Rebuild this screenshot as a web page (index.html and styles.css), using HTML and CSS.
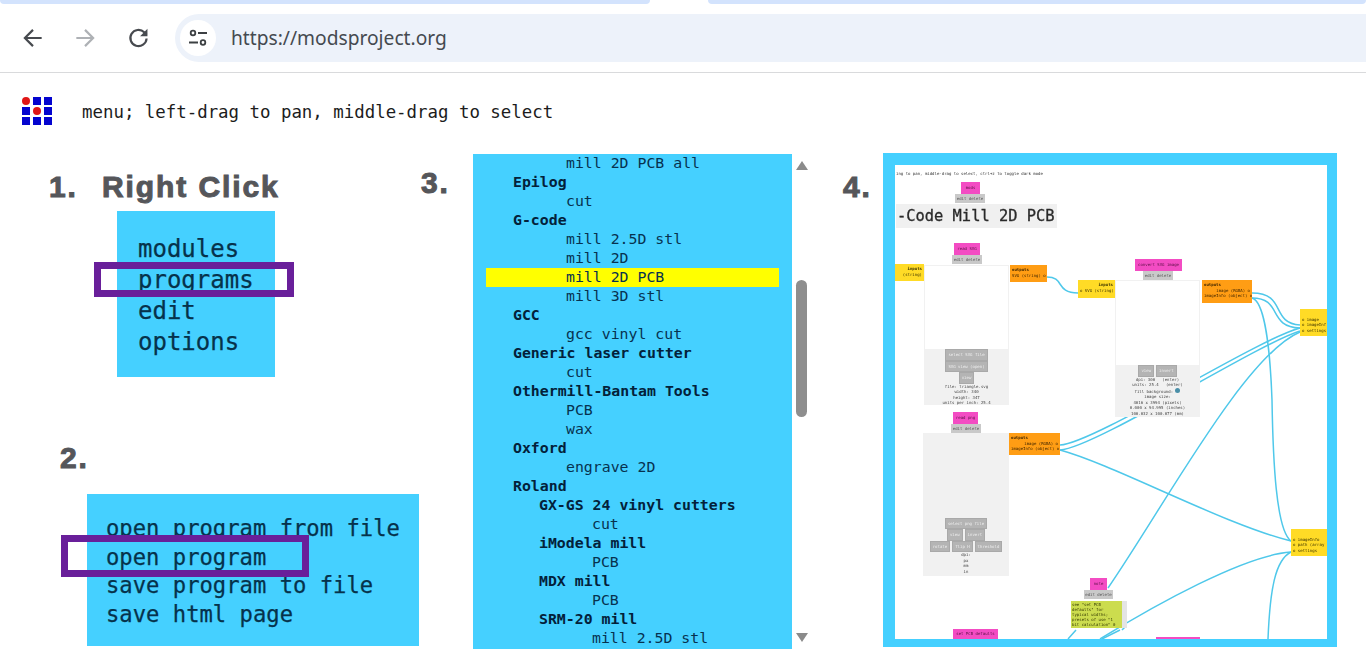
FILE: index.html
```html
<!DOCTYPE html>
<html lang="en">
<head>
<meta charset="utf-8">
<title>mods project</title>
<link rel="stylesheet" href="styles.css">
</head>
<body>
<header class="browser">
  <div class="tabstrip"><span class="strip strip-left"></span><span class="strip strip-right"></span></div>
  <div class="toolbar">
    <svg class="tool" viewBox="0 0 24 24"><path d="M20 12H5M12 4.500 4.500 12l7.500 7.500" fill="none" stroke="#474a4f" stroke-width="2"/></svg>
    <svg class="tool" viewBox="0 0 24 24"><path d="M4 12h15M12 4.500l7.500 7.500-7.500 7.500" fill="none" stroke="#aeb1b5" stroke-width="2"/></svg>
    <svg class="tool" viewBox="0 0 24 24"><path d="M19 12.500a7.500 7.500 0 1 1-2.200-5.800L19 9" fill="none" stroke="#474a4f" stroke-width="2"/><path d="M19.800 3.500v6.800H13z" fill="#474a4f"/></svg>
    <div class="omnibox">
      <span class="site-chip">
        <svg class="chip-icon" viewBox="0 0 20 20"><g fill="none" stroke="#3c4043" stroke-width="1.800"><circle cx="5" cy="5" r="2.300"/><path d="M10 5h9M1 14.500h9"/><circle cx="15" cy="14.500" r="2.300"/></g></svg>
      </span>
      <span class="url">https://modsproject.org</span>
    </div>
  </div>
</header>
<main class="canvas">
  <div class="logo">
    <i class="dot"></i><i></i><i></i>
    <i></i><i class="dot"></i><i></i>
    <i></i><i></i><i></i>
  </div>
  <p class="hint">menu; left-drag to pan, middle-drag to select</p>

  <h2 class="step step-1"><span class="step-num">1.</span>Right Click</h2>
  <ul class="menu menu-1">
    <li>modules</li><li>programs</li><li>edit</li><li>options</li>
  </ul>
  <div class="frame frame-1"></div>

  <h2 class="step step-2">2.</h2>
  <ul class="menu menu-2">
    <li>open program from file</li><li>open program</li><li>save program to file</li><li>save html page</li>
  </ul>
  <div class="frame frame-2"></div>

  <h2 class="step step-3">3.</h2>
  <div class="listing">
    <ul class="programs">
      <li class="lv2">mill 2D PCB all</li>
      <li class="lv1 b">Epilog</li>
      <li class="lv2">cut</li>
      <li class="lv1 b">G-code</li>
      <li class="lv2">mill 2.5D stl</li>
      <li class="lv2">mill 2D</li>
      <li class="lv2 hit">mill 2D PCB</li>
      <li class="lv2">mill 3D stl</li>
      <li class="lv1 b">GCC</li>
      <li class="lv2">gcc vinyl cut</li>
      <li class="lv1 b">Generic laser cutter</li>
      <li class="lv2">cut</li>
      <li class="lv1 b">Othermill-Bantam Tools</li>
      <li class="lv2">PCB</li>
      <li class="lv2">wax</li>
      <li class="lv1 b">Oxford</li>
      <li class="lv2">engrave 2D</li>
      <li class="lv1 b">Roland</li>
      <li class="lv3 b">GX-GS 24 vinyl cutters</li>
      <li class="lv4">cut</li>
      <li class="lv3 b">iModela mill</li>
      <li class="lv4">PCB</li>
      <li class="lv3 b">MDX mill</li>
      <li class="lv4">PCB</li>
      <li class="lv3 b">SRM-20 mill</li>
      <li class="lv4">mill 2.5D stl</li>
    </ul>
    <div class="scrollbar">
      <span class="arrow arrow-up"></span>
      <span class="thumb"></span>
      <span class="arrow arrow-down"></span>
    </div>
  </div>

  <h2 class="step step-4">4.</h2>
  <div class="shot">
    <div class="diagram">
      <svg class="wires" viewBox="0 0 432 474">
        <g fill="none" stroke="#4fc8ea" stroke-width="1.500">
          <path d="M152 112C170 112 160 128 183 128"/>
          <path d="M357 128C392 128 375 158 405 160"/>
          <path d="M357 133C388 133 372 162 405 163"/>
          <path d="M357 133C369 136 375 180 377 235C378 295 381 365 396 376"/>
          <path d="M165 280C200 278 360 175 405 163"/>
          <path d="M165 285C200 283 360 180 405 166"/>
          <path d="M165 285C220 300 330 360 396 376"/>
          <path d="M213 423C270 340 350 190 405 167"/>
          <path d="M205 474C260 440 350 390 396 387"/>
          <path d="M373 474C375 425 380 395 396 387"/>
          <path d="M173 474 181 465M207 474 225 465M227 465 231 461"/>
        </g>
      </svg>
      <p class="d-hint">ing to pan, middle-drag to select, ctrl+z to toggle dark mode</p>
      <span class="tag t1">mods</span><span class="ctl c1">edit delete</span>
      <div class="d-title">-Code Mill 2D PCB</div>

      <span class="tag t2">read SVG</span><span class="ctl c2">edit delete</span>
      <div class="port in p1"><b>inputs</b><br>(string)</div>
      <div class="mod m1">
        <div class="preview"></div>
        <div class="controls">
          <span class="btn">select SVG file</span>
          <span class="btn">SVG view (open)</span>
          <span class="btn">view</span>
          <span>file: triangle.svg</span><span>width: 340</span><span>height: 347</span><span>units per inch: 25.4</span>
        </div>
      </div>
      <div class="port out p2"><b>outputs</b><br>SVG (string) o</div>

      <div class="port in p3"><b>inputs</b><br>o SVG (string)</div>
      <span class="tag t3">convert SVG image</span><span class="ctl c3">edit delete</span>
      <div class="mod m2">
        <div class="preview"></div>
        <div class="controls">
          <span class="btn-row"><span class="btn">view</span><span class="btn">invert</span></span>
          <span>dpi: 300 &nbsp; (enter)</span><span>units: 25.4 &nbsp; (enter)</span><span>fill background: <i class="radio"></i></span><span>image size:</span><span>4016 x 3994 (pixels)</span><span>0.000 x 94.995 (inches)</span><span>100.032 x 100.077 (mm)</span>
        </div>
      </div>
      <div class="port out p4"><b>outputs</b><span class="r">image (RGBA) o</span>imageInfo (object) o</div>
      <div class="port in p5"><br>o image<br>o imageInf<br>o settings</div>

      <span class="tag t4">read png</span><span class="ctl c4">edit delete</span>
      <div class="mod m3">
        <div class="controls">
          <span class="btn">select png file</span>
          <span class="btn-row"><span class="btn">view</span><span class="btn">invert</span></span>
          <span class="btn-row"><span class="btn">rotate</span><span class="btn">flip H</span><span class="btn">threshold</span></span>
          <span>dpi:</span><span>px</span><span>mm</span><span>in</span>
        </div>
      </div>
      <div class="port out p6"><b>outputs</b><span class="r">image (RGBA) o</span>imageInfo (object) o</div>
      <div class="port in p7"><br>o imageInfo<br>o path (array<br>o settings</div>

      <span class="tag t5">note</span><span class="ctl c5">edit delete</span>
      <div class="note">see "set PCB<br>defaults" for<br>typical widths;<br>presets of use "1<br>bit calculation" 0</div>
      <span class="note-bar"></span>
      <span class="tag t6">set PCB defaults</span>
      <span class="tag t7"></span>
    </div>
  </div>
</main>
</body>
</html>
```
FILE: styles.css
```css
* { box-sizing: border-box; }
html, body { margin: 0; height: 100%; overflow: hidden; background: #fff; }
body { font-family: "DejaVu Sans Mono", monospace; color: #111; }

/* browser chrome */
.browser { height: 73px; border-bottom: 1px solid #d9dadc; display: flex; flex-direction: column; }
.tabstrip { height: 4px; display: flex; gap: 58px; }
.strip { background: #d3e3fd; border-radius: 0 0 6px 6px; }
.strip-left { width: 650px; }
.strip-right { flex: 1; }
.toolbar { flex: 1; display: flex; align-items: center; padding: 0 0 0 20px; }
.tool { width: 26px; height: 26px; margin-right: 26px; }
.tool:nth-child(3) { margin-left: 2px; margin-right: 24px; }
.omnibox { flex: 1; height: 48px; margin-left: -1px; background: #edf2fa; border-radius: 24px 0 0 24px; display: flex; align-items: center; padding-left: 5px; }
.site-chip { width: 36px; height: 36px; border-radius: 50%; background: #fff; display: flex; align-items: center; justify-content: center; }
.chip-icon { width: 20px; height: 20px; }
.url { margin-left: 15px; font: 19.200px/1 "Noto Sans", sans-serif; color: #454a50; }

/* free canvas collage */
.canvas { position: relative; height: 595px; overflow: hidden; }
.logo { position: absolute; left: 22px; top: 24px; display: grid; grid-template-columns: repeat(3, 8px); grid-auto-rows: 8px; gap: 2px 3px; }
.logo i { background: #0404cf; }
.logo .dot { background: #e01616; border-radius: 50%; }
.hint { position: absolute; left: 82px; top: 28px; margin: 0; font-size: 17.4px; line-height: 22px; white-space: nowrap; color: #1c1c1c; }

.step { position: absolute; margin: 0; font: 700 30px/34px "Liberation Sans", Arial, sans-serif; letter-spacing: 1.900px; color: #55565a; -webkit-text-stroke: 1px #55565a; white-space: nowrap; }
.step-num { display: inline-block; width: 53px; }
.step-1 { left: 49px; top: 97px; }
.step-2 { left: 60px; top: 368px; }
.step-3 { left: 421px; top: 93px; }
.step-4 { left: 843px; top: 97px; }

.menu { position: absolute; margin: 0; list-style: none; background: #45d0ff; color: #06324b; white-space: nowrap; -webkit-text-stroke: 0.25px #06324b; }
.menu-1 { left: 117px; top: 138px; width: 158px; height: 166px; padding: 23px 0 0 21px; font-size: 24px; line-height: 31px; }
.menu-2 { left: 87px; top: 421px; width: 332px; height: 152px; padding: 20px 0 0 19px; font-size: 22.2px; line-height: 28.600px; }
.frame { position: absolute; border: 7px solid #691f9a; }
.frame-1 { left: 94px; top: 189px; width: 200px; height: 35px; }
.frame-2 { left: 61px; top: 462px; width: 248px; height: 42px; }

/* program listing */
.listing { position: absolute; left: 473px; top: 81px; display: flex; gap: 3px; height: 495px; }
.programs { width: 319px; margin: 0; padding: 0; list-style: none; background: #45d0ff; font-size: 14.85px; line-height: 19px; color: #07324f; overflow: hidden; white-space: nowrap; }
.programs .b { font-weight: 700; color: #03213a; }
.lv1 { padding-left: 40px; }
.lv2 { padding-left: 93px; }
.lv3 { padding-left: 66px; }
.lv4 { padding-left: 119px; }
.programs .hit { width: 293px; margin-left: 13px; padding-left: 80px; background: #ffff00; }
.scrollbar { width: 13px; display: flex; flex-direction: column; align-items: center; }
.arrow { width: 0; height: 0; border-left: 6px solid transparent; border-right: 6px solid transparent; }
.arrow-up { margin-top: 7px; border-bottom: 9px solid #8b8b8b; }
.arrow-down { margin-top: 216px; border-top: 9px solid #8b8b8b; }
.thumb { width: 11px; height: 137px; margin-top: 110px; background: #8e8e8e; border-radius: 6px; }

/* screenshot of the mods diagram */
.shot { position: absolute; left: 883px; top: 80px; width: 454px; height: 494px; padding: 12px 10px 8px 12px; background: #45d0ff; }
.diagram { position: relative; width: 432px; height: 474px; background: #fff; overflow: hidden; font-size: 4px; line-height: 5.500px; white-space: nowrap; filter: blur(0.5px); }
.wires { position: absolute; inset: 0; width: 432px; height: 474px; }
.d-hint { position: absolute; left: 1px; top: 6px; margin: 0; font-size: 4px; color: #333; }
.tag, .ctl { position: absolute; display: flex; align-items: center; justify-content: center; }
.tag { background: #f34cc3; color: #5c1146; }
.ctl { background: #c9c9c9; color: #555; }
.t1 { left: 66px; top: 17px; width: 19px; height: 12px; }
.c1 { left: 60px; top: 29px; width: 30px; height: 9px; }
.d-title { position: absolute; left: 1px; top: 39px; width: 161px; height: 24px; padding-left: 1px; background: #f0f0f0; font-size: 15.400px; line-height: 24px; color: #2a2a2a; -webkit-text-stroke: 0.3px #2a2a2a; }
.t2 { left: 59px; top: 78px; width: 26px; height: 12px; }
.c2 { left: 57px; top: 90px; width: 30px; height: 9px; }
.port { position: absolute; padding: 2px; color: #3a3200; }
.in { background: #ffdb26; text-align: right; }
.out { background: #ff9d14; color: #3d2400; }
.r { display: block; text-align: right; }
.p1 { left: 0; top: 99px; width: 29px; height: 17px; }
.p2 { left: 115px; top: 100px; width: 37px; height: 17px; text-align: left; }
.p3 { left: 183px; top: 115px; width: 37px; height: 18px; }
.p4 { left: 307px; top: 115px; width: 50px; height: 23px; }
.p5 { left: 405px; top: 144px; width: 27px; height: 27px; text-align: left; }
.p6 { left: 114px; top: 268px; width: 51px; height: 22px; }
.p7 { left: 396px; top: 364px; width: 36px; height: 27px; text-align: left; }
.mod { position: absolute; background: #f1f1f1; display: flex; flex-direction: column; padding: 1px; }
.preview { flex: none; background: #fff; }
.controls { display: flex; flex-direction: column; align-items: center; color: #444; }
.btn { display: block; background: #b4b4b4; color: #eee; padding: 2px 2px; outline: 1px solid #a9a9a9; margin: 1px 1px; }
.btn-row { display: flex; gap: 2px; }
.m1 { left: 29px; top: 100px; width: 85px; height: 140px; }
.m1 .preview { height: 83px; }
.m2 { left: 220px; top: 115px; width: 85px; height: 137px; }
.m2 .preview { height: 84px; }
.m3 { left: 28px; top: 268px; width: 86px; height: 143px; justify-content: flex-end; padding-bottom: 2px; }
.radio { display: inline-block; width: 5px; height: 5px; border-radius: 50%; background: #4a8fa8; }
.t3 { left: 240px; top: 94px; width: 47px; height: 12px; }
.c3 { left: 248px; top: 106px; width: 30px; height: 9px; }
.t4 { left: 58px; top: 247px; width: 25px; height: 12px; }
.c4 { left: 56px; top: 259px; width: 30px; height: 9px; }
.t5 { left: 195px; top: 413px; width: 17px; height: 12px; }
.c5 { left: 189px; top: 425px; width: 29px; height: 9px; }
.note { position: absolute; left: 176px; top: 436px; width: 51px; height: 27px; padding: 1px; background: #ccdc4e; line-height: 5px; color: #343a00; }
.note-bar { position: absolute; left: 227px; top: 436px; width: 5px; height: 27px; background: #e4e4e4; }
.t6 { left: 58px; top: 464px; width: 45px; height: 10px; }
.t7 { left: 261px; top: 472px; width: 44px; height: 2px; }
```
